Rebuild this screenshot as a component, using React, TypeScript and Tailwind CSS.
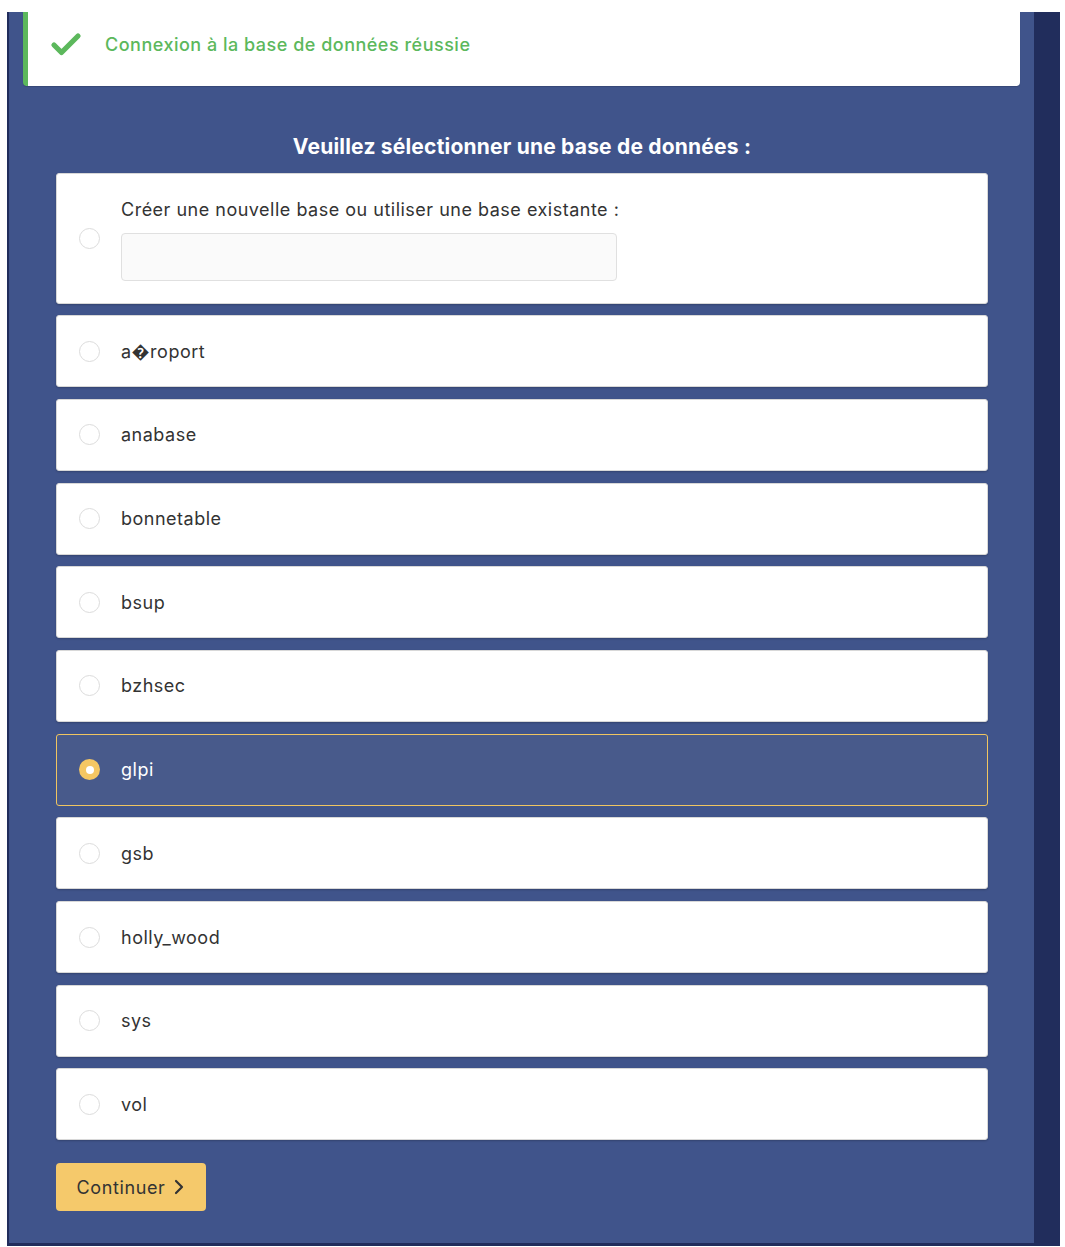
import { Check, ChevronRight } from "lucide-react";

const bases = ["a\uFFFDroport", "anabase", "bonnetable", "bsup", "bzhsec", "glpi", "gsb", "holly_wood", "sys", "vol"];
const selected = "glpi";

function Radio({ checked }: { checked: boolean }) {
	if (checked) {
		return (
			<span className="w-[21px] h-[21px] rounded-full bg-[#f5c763] flex items-center justify-center shrink-0">
				<span className="w-[8px] h-[8px] rounded-full bg-white" />
			</span>
		);
	}
	return <span className="w-[21px] h-[21px] rounded-full border border-[#dcdcdc] bg-white shrink-0" />;
}

export default function App() {
	return (
		<div className="bg-white min-h-[1247px] pt-[12px] pl-[7px]" style={{ fontFamily: "Inter, 'Noto Sans', sans-serif" }}>
			<div className="w-[1053px] bg-[#212d5c] pl-[2px] pr-[26px] pb-[3px]">
				<div className="bg-[#40548b] pl-[47px] pr-[46px] pb-[32px]">
					<div className="-ml-[33px] -mr-[32px] h-[74px] bg-white rounded-b-[4px] border-l-[5px] border-[#5cb85c] flex items-center pl-[20px] pb-[9px] gap-[21px] shadow-[0_1px_1px_rgba(0,0,0,0.15)]">
						<Check className="w-[36px] h-[36px] text-[#5cb85c]" strokeWidth={3.5} />
						<span className="text-[#5cb85c] text-[18px] font-medium tracking-[0.5px]">Connexion à la base de données réussie</span>
					</div>
					<h2 className="text-white text-[21px] font-bold text-center mt-[45px] mb-[10px] tracking-[0.2px]">
						Veuillez sélectionner une base de données :
					</h2>
					<div className="flex flex-col gap-[11.7px] tracking-[0.5px]">
						<div className="h-[131px] bg-white rounded-[3px] border border-[#d8d8d8] flex items-center pl-[22px] gap-[21px] shadow-[0_1px_2px_rgba(0,0,0,0.2)]">
							<Radio checked={false} />
							<div className="flex flex-col gap-[10px]">
								<span className="text-[#333] text-[18px]">Créer une nouvelle base ou utiliser une base existante :</span>
								<input className="w-[496px] h-[48px] bg-[#fafafa] border border-[#e0e0e0] rounded-[4px] outline-none" />
							</div>
						</div>
						{bases.map((b) => {
							const on = b === selected;
							return (
								<div
									key={b}
									className={
										on
											? "h-[72px] bg-[#485a8b] rounded-[3px] border border-[#f0c560] flex items-center pl-[22px] gap-[21px]"
											: "h-[72px] bg-white rounded-[3px] border border-[#d8d8d8] flex items-center pl-[22px] gap-[21px] shadow-[0_1px_2px_rgba(0,0,0,0.2)]"
									}
								>
									<Radio checked={on} />
									<span className={on ? "text-white text-[18px]" : "text-[#333] text-[18px]"}>{b}</span>
								</div>
							);
						})}
					</div>
					<button className="mt-[23px] w-[150px] h-[48px] bg-[#f5c96b] rounded-[4px] flex items-center justify-center gap-[2px] text-[#333] text-[18px] tracking-[0.6px] pl-[6px]">
						Continuer
						<ChevronRight className="w-[24px] h-[24px]" strokeWidth={2.2} />
					</button>
				</div>
			</div>
		</div>
	);
}
